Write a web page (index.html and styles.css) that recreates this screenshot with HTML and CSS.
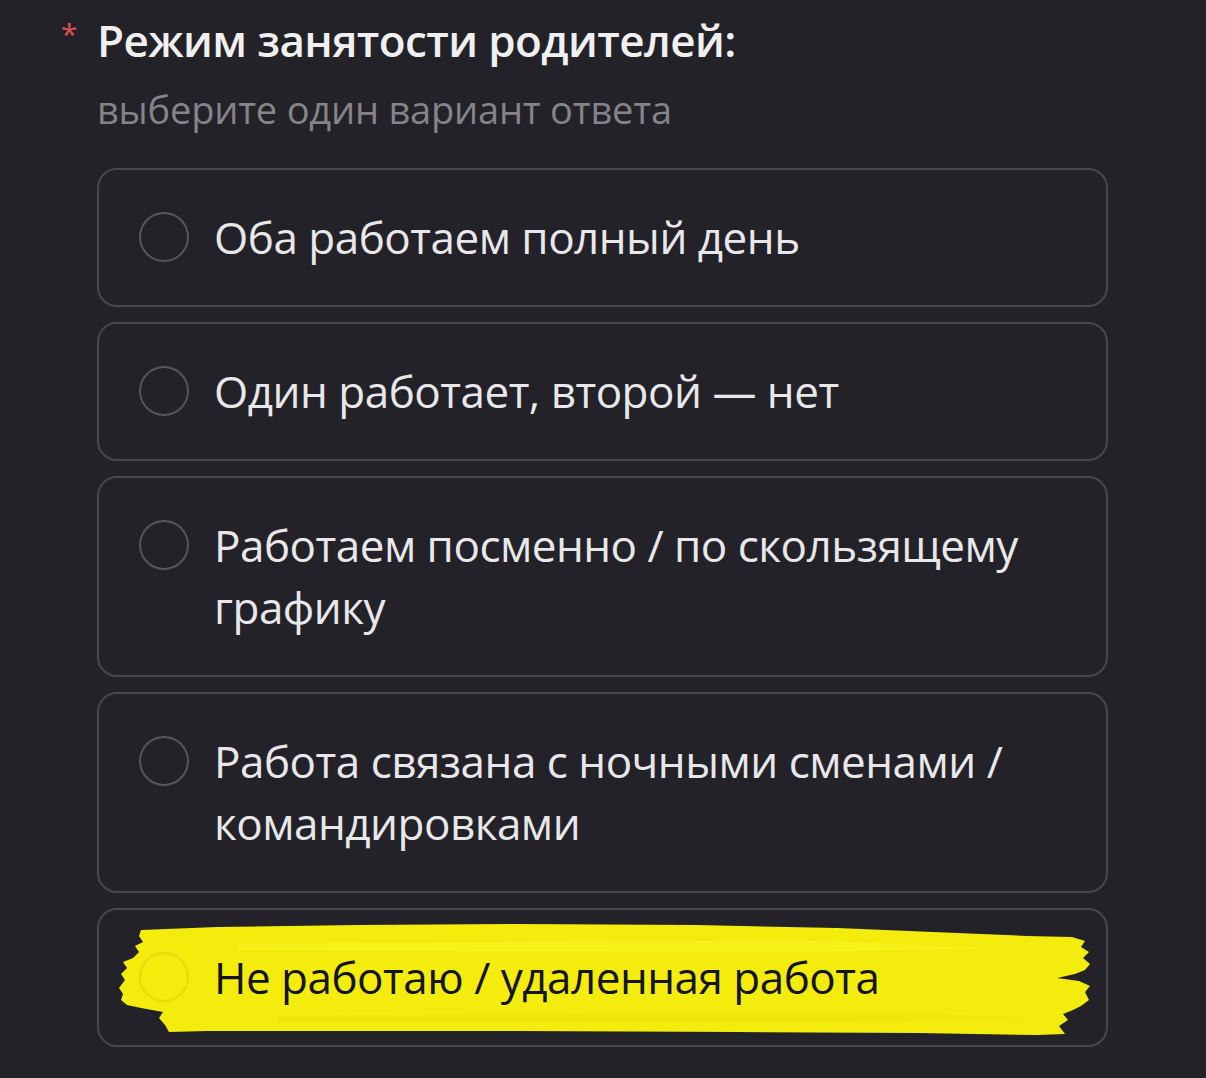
FILE: index.html
```html
<!DOCTYPE html>
<html lang="ru">
<head>
	<meta charset="UTF-8">
	<title>Режим занятости родителей</title>
	<link rel="stylesheet" href="styles.css">
</head>
<body>
	<div class="question">
		<h3 class="q_title">Режим занятости родителей:</h3>
		<p class="q_hint">выберите один вариант ответа</p>
		<ul class="options">
			<li class="option"><span class="radio"></span><span class="label">Оба работаем полный день</span></li>
			<li class="option"><span class="radio"></span><span class="label">Один работает, второй — нет</span></li>
			<li class="option"><span class="radio"></span><span class="label">Работаем посменно / по скользящему<br>графику</span></li>
			<li class="option"><span class="radio"></span><span class="label">Работа связана с ночными сменами /<br>командировками</span></li>
			<li class="option marked">
				<svg class="marker" width="1011" height="140" viewBox="0 0 1011 140">
					<path fill="#f3ec0c" d="M44 22 L120 19 L260 17 L420 16 L600 17 L740 20 L860 25 L930 28 L975 29 L988 33 L984 39 L992 44 L986 50 L993 56 L988 62 L978 66 L960 70 L982 73 L993 78 L988 84 L992 92 L984 98 L976 102 L966 106 L971 112 L962 118 L968 126 L940 127 L820 125 L640 124 L420 123 L220 123 L110 123 L72 124 L68 117 L62 110 L66 104 L44 100 L30 97 L24 92 L26 86 L22 80 L28 72 L24 66 L30 60 L26 54 L36 50 L42 44 L38 38 L46 34 L42 28 Z"/>
					<path fill="#fbf52a" opacity="0.5" d="M140 36 L700 32 L900 40 L700 44 L140 42 Z"/>
					<path fill="#e8e000" opacity="0.35" d="M180 108 L760 104 L940 110 L760 114 L180 114 Z"/>
				</svg>
				<span class="radio"></span><span class="label">Не работаю / удаленная работа</span>
			</li>
		</ul>
	</div>
</body>
</html>
```

FILE: styles.css
```css
body,h3,p,ul,li{padding: 0;margin: 0;}
h3{font-weight: normal;}
li{list-style: none;}

body{background: #232228;font-family: "Open Sans","Noto Sans",sans-serif;color: #e8e8ea;}
.question{width: 1011px;padding: 10px 0 0 97px;}
.q_title{position: relative;font-size: 44px;line-height: 60px;font-weight: 600;color: #f0f0f0;letter-spacing: -0.6px;}
.q_title:before{content: "*";position: absolute;left: -36px;top: -6px;color: #e0524f;font-size: 30px;font-weight: 400;}
.q_hint{margin-top: 14px;font-size: 38px;line-height: 50px;color: #85848a;letter-spacing: -0.2px;}
.options{margin-top: 34px;display: flex;flex-direction: column;gap: 15px;}
.option{position: relative;display: flex;align-items: flex-start;gap: 25px;padding: 36px 40px 37px;border: 2px solid #48474d;border-radius: 20px;}
.radio{flex: none;box-sizing: border-box;width: 50px;height: 50px;margin-top: 6px;border: 2px solid #56555b;border-radius: 50%;}
.label{font-size: 44px;line-height: 62px;letter-spacing: -0.5px;position: relative;}

.marked .marker{position: absolute;left: -2px;top: -2px;}
.marked .radio{position: relative;border-color: #e4dc0c;}
.marked .label{color: #141414;}
```
